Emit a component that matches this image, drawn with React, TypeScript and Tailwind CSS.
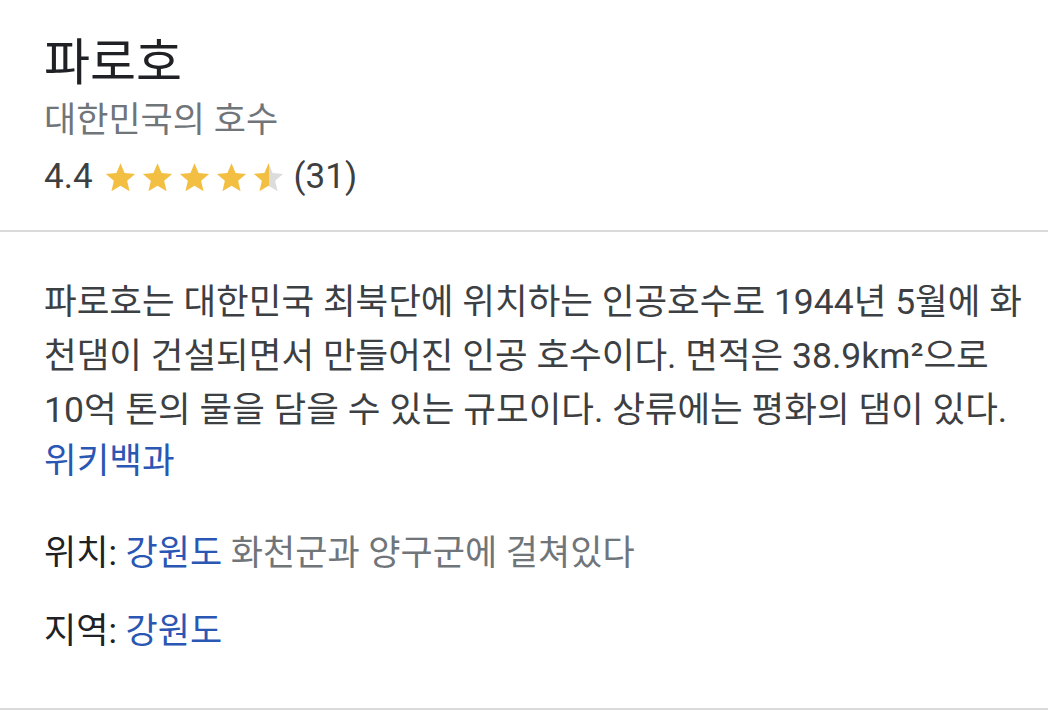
import React from "react";

const FONT = "font-['Roboto','Noto_Sans_CJK_KR',sans-serif]";

function Star({ fill }: { fill: number }) {
  const id = `half-${fill}`;
  return (
    <svg viewBox="1.8 2.2 20.4 19.2" className="w-[31px] h-[29px]">
      <defs>
        <linearGradient id={id}>
          <stop offset={`${fill * 100}%`} stopColor="#f2bf42" />
          <stop offset={`${fill * 100}%`} stopColor="#dcdcdc" />
        </linearGradient>
      </defs>
      <path
        d="M12 2.3l2.7 6.5 7 .6-5.3 4.6 1.6 6.9L12 17.2l-6 3.7 1.6-6.9-5.3-4.6 7-.6z"
        fill={`url(#${id})`}
      />
    </svg>
  );
}

export default function App() {
  return (
    <div className={`w-[1048px] h-[722px] bg-white ${FONT} overflow-hidden`}>
      {/* Header */}
      <div className="px-[44px] pt-[32px] pb-[24px] border-b-2 border-[#dadada]">
        <h1 className="text-[50px] leading-[62px] text-[#202124]">파로호</h1>
        <p className="text-[35px] leading-[54px] text-[#70757a]">대한민국의 호수</p>
        <div className="flex items-center h-[58px] text-[35px] text-[#3c4043]">
          <span>4.4</span>
          <div className="flex items-center gap-[6px] ml-[12px]">
            <Star fill={1} />
            <Star fill={1} />
            <Star fill={1} />
            <Star fill={1} />
            <Star fill={0.5} />
          </div>
          <span className="ml-[10px]">(31)</span>
        </div>
      </div>

      {/* Description */}
      <div className="px-[44px] pt-[43px] border-b-2 border-[#dadada] h-[478px]">
        <p className="text-[35.5px] leading-[54px] text-[#3c4043]">
          <span className="block whitespace-nowrap">
            파로호는 대한민국 최북단에 위치하는 인공호수로 1944년 5월에 화
          </span>
          <span className="block whitespace-nowrap">
            천댐이 건설되면서 만들어진 인공 호수이다. 면적은 38.9km²으로
          </span>
          <span className="block whitespace-nowrap">
            10억 톤의 물을 담을 수 있는 규모이다. 상류에는 평화의 댐이 있다.
          </span>
          <span className="block text-[#2a56b4] leading-[48px]">위키백과</span>
        </p>

        <div className="mt-[46px] flex flex-col gap-[32px] text-[35px] leading-[46px]">
          <div>
            <span className="text-[#202124]">위치: </span>
            <span className="text-[#2a56b4]">강원도</span>
            <span className="text-[#70757a]"> 화천군과 양구군에 걸쳐있다</span>
          </div>
          <div>
            <span className="text-[#202124]">지역: </span>
            <span className="text-[#2a56b4]">강원도</span>
          </div>
        </div>
      </div>
    </div>
  );
}
